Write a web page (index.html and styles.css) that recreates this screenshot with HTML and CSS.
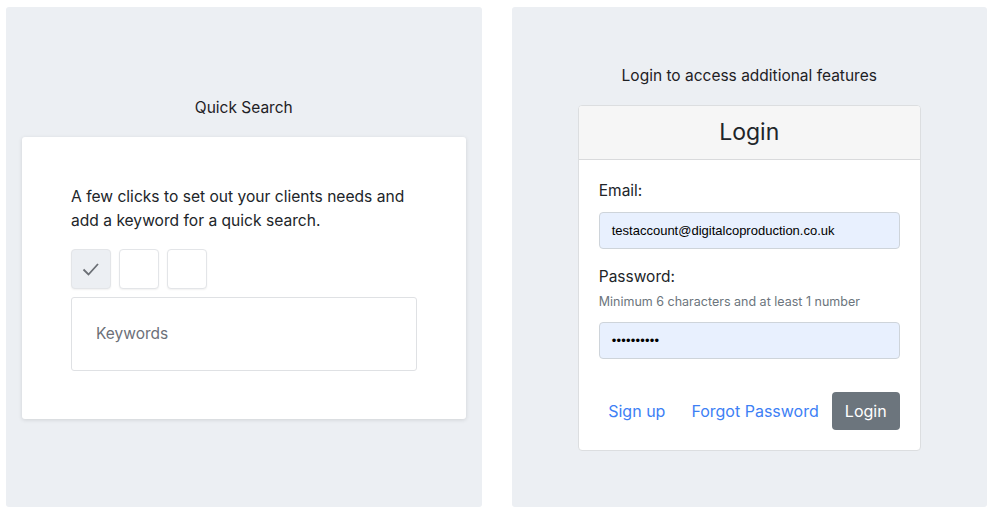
FILE: index.html
```html
<!DOCTYPE html>
<html>
<head>
<meta charset="utf-8">
<link rel="stylesheet" href="styles.css">
</head>
<body>
<div class="page">
  <section class="panel">
    <div class="title">Quick Search</div>
    <div class="search-card">
      <p class="intro">A few clicks to set out your clients needs and add a keyword for a quick search.</p>
      <div class="checks">
        <span class="check on"><svg width="22" height="22" viewBox="0 0 22 22"><path d="M3.5 11.5 L8.5 16.5 L18 6" fill="none" stroke="#6b6f75" stroke-width="1.8"/></svg></span>
        <span class="check"></span>
        <span class="check"></span>
      </div>
      <div class="keywords">Keywords</div>
    </div>
  </section>
  <section class="panel">
    <div class="title">Login to access additional features</div>
    <div class="login-card">
      <div class="login-head">Login</div>
      <div class="login-body">
        <div class="label">Email:</div>
        <div class="field">testaccount@digitalcoproduction.co.uk</div>
        <div class="label pw">Password:</div>
        <div class="hint">Minimum 6 characters and at least 1 number</div>
        <div class="field dots">••••••••••</div>
        <div class="actions">
          <a class="link">Sign up</a>
          <a class="link">Forgot Password</a>
          <span class="btn">Login</span>
        </div>
      </div>
    </div>
  </section>
</div>
</body>
</html>
```

FILE: styles.css
```css
* { box-sizing: border-box; }
html, body { margin: 0; padding: 0; background: #fff; }
body { font-family: Inter, "Noto Sans", sans-serif; color: #212529; }
.page {
  display: flex;
  gap: 30px;
  padding: 7px 13px 11px 6px;
  height: 518px;
}
.panel {
  flex: 1;
  background: #eceff3;
  border-radius: 3px;
  display: flex;
  flex-direction: column;
  align-items: center;
  justify-content: center;
  padding: 0 16px;
}
.title {
  font-size: 15.5px;
  line-height: 24px;
  margin-bottom: 17px;
  color: #1e2125;
}
.search-card {
  align-self: stretch;
  background: #fff;
  border-radius: 3px;
  box-shadow: 0 1px 4px rgba(0,0,0,0.12);
  padding: 48px 49px;
}
.intro {
  margin: 0 0 16px;
  font-size: 15.6px;
  line-height: 24px;
  color: #212529;
}
.checks { display: flex; gap: 8px; margin-bottom: 8px; }
.check {
  width: 40px; height: 40px;
  border: 1px solid #e3e5e8;
  border-radius: 4px;
  background: #fff;
  display: flex; align-items: center; justify-content: center;
  box-shadow: 0 1px 2px rgba(0,0,0,0.06);
}
.check.on { background: #eceff3; }
.keywords {
  height: 74px;
  border: 1px solid #dfe1e4;
  border-radius: 3px;
  padding: 0 24px;
  display: flex; align-items: center;
  font-size: 15.5px;
  color: #6c7078;
}
.login-card {
  width: 343px;
  background: #fff;
  border: 1px solid #dcdee0;
  border-radius: 4px;
  overflow: hidden;
}
.login-head {
  background: #f6f6f6;
  border-bottom: 1px solid #d9dadc;
  height: 54px;
  display: flex; align-items: center; justify-content: center;
  font-size: 23px;
  color: #212529;
}
.login-body { padding: 19px 20px 20px; }
.label { font-size: 15.5px; line-height: 24px; margin-bottom: 9px; color: #212529; }
.label.pw { margin: 16px 0 4px; }
.hint { font-size: 12.5px; line-height: 18px; color: #6c757d; margin-bottom: 11px; }
.field {
  height: 37px;
  background: #e8f0fe;
  border: 1px solid #ced4da;
  border-radius: 4px;
  padding: 0 12px;
  display: flex; align-items: center;
  font-family: "Liberation Sans", Arial, sans-serif;
  font-size: 13px;
  color: #000;
}
.field.dots { font-size: 13px; letter-spacing: 0.2px; }
.actions {
  display: flex;
  justify-content: flex-end;
  align-items: center;
  margin-top: 33px;
}
.link {
  font-size: 16px;
  color: #3d80f5;
  padding: 0 13px;
  line-height: 38px;
  white-space: nowrap;
}
.btn {
  flex: none;
  height: 38px;
  width: 68px;
  background: #6c757d;
  color: #fff;
  border-radius: 4px;
  font-size: 16px;
  display: flex; align-items: center; justify-content: center;
}
```
